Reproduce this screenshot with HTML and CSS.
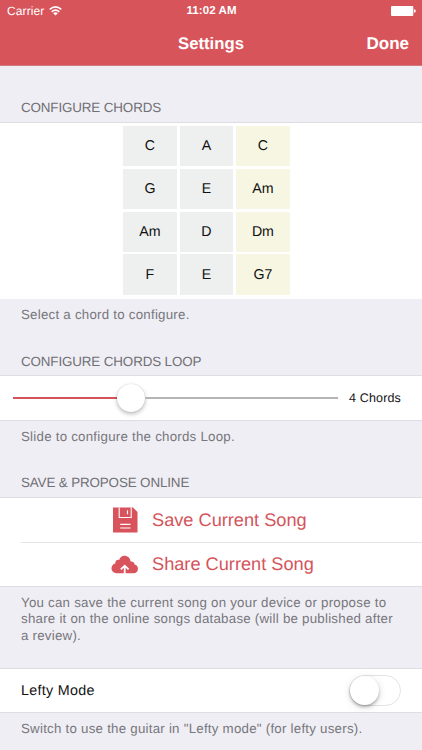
FILE: index.html
```html
<!DOCTYPE html>
<html lang="en">
<head>
<meta charset="utf-8">
<title>Settings</title>
<link rel="stylesheet" href="styles.css">
</head>
<body>
<header class="header">
  <div class="status">
    <div class="carrier"><span>Carrier</span>
      <svg class="wifi" width="13" height="10" viewBox="0 0 13 10"><g fill="none" stroke="#fff" stroke-width="1.6"><path d="M.7 3.4Q6.5-1.5 12.3 3.4"/><path d="M2.7 5.8Q6.5 2.4 10.3 5.8"/></g><path d="M4.2 7.2Q6.5 5.3 8.8 7.2L6.5 9.6Z" fill="#fff"/></svg>
    </div>
    <span class="time">11:02 AM</span>
    <svg class="battery" width="25" height="10" viewBox="0 0 25 10"><rect width="22.3" height="10" rx="1" fill="#fff"/><path d="M23 3.2Q24.8 3.5 24.8 5T23 6.8Z" fill="#fff"/></svg>
  </div>
  <div class="nav"><h1 class="title">Settings</h1><span class="done">Done</span></div>
</header>
<main>
  <section class="chords-section">
    <h2 class="heading">CONFIGURE CHORDS</h2>
    <div class="panel chords-panel">
      <div class="chords">
        <span class="chord">C</span><span class="chord">A</span><span class="chord alt">C</span>
        <span class="chord">G</span><span class="chord">E</span><span class="chord alt">Am</span>
        <span class="chord">Am</span><span class="chord">D</span><span class="chord alt">Dm</span>
        <span class="chord">F</span><span class="chord">E</span><span class="chord alt">G7</span>
      </div>
    </div>
    <p class="note select-note">Select a chord to configure.</p>
  </section>
  <section class="loop-section">
    <h2 class="heading loop-heading">CONFIGURE CHORDS LOOP</h2>
    <div class="panel loop-panel">
      <div class="slider"><span class="fill"></span><span class="knob"></span><span class="rest"></span></div>
      <span class="count">4 Chords</span>
    </div>
    <p class="note slide-note">Slide to configure the chords Loop.</p>
  </section>
  <section class="save-section">
    <h2 class="heading save-heading">SAVE &amp; PROPOSE ONLINE</h2>
    <div class="panel actions">
      <div class="action">
        <svg class="icon" width="28" height="26" viewBox="0 0 28 26"><path d="M2 .5H22L26.5 5V25.5H2Z" fill="#d8535b"/><path d="M8.2 .5V10.5H20.2V.5" fill="none" stroke="#fff" stroke-width="1.1"/><path d="M16.5 3.2V7.3M9.2 17.3H19.5M9.2 21H19.5" fill="none" stroke="#fff" stroke-width="1.2"/></svg>
        <span class="save-label">Save Current Song</span>
      </div>
      <div class="action">
        <svg class="icon" width="28" height="26" viewBox="0 0 28 26"><path d="M6.2 21.2C2.7 21.2.5 19 .5 16.2C.5 13.8 2.1 11.8 4.3 11.4C4 8.8 6.2 7.2 8.3 7.8C9.1 5.1 11 3.8 13.4 3.8C16.8 3.8 19.3 6.2 19.6 9.5C21.6 9.1 23.4 10.5 23.6 12.5C25.7 12.9 27 14.6 27 16.7C27 19.2 25.2 21.2 22.5 21.2Z" fill="#d8535b"/><path d="M13.7 22V14M9.8 17.3L13.7 13.7L17.6 17.3" fill="none" stroke="#fff" stroke-width="1.8"/></svg>
        <span class="share-label">Share Current Song</span>
      </div>
    </div>
    <p class="note save-note">You can save the current song on your device or propose to<br>share it on the online songs database (will be published after<br>a review).</p>
  </section>
  <section>
    <div class="panel lefty"><span class="lefty-label">Lefty Mode</span><span class="switch"><span class="thumb"></span></span></div>
    <p class="note lefty-note">Switch to use the guitar in "Lefty mode" (for lefty users).</p>
  </section>
</main>
</body>
</html>
```
FILE: styles.css
```css
* { box-sizing: border-box; }
body {
  margin: 0;
  height: 750px;
  overflow: hidden;
  background: #efeef4;
  color: #111;
  font-family: "Liberation Sans", Arial, sans-serif;
  text-rendering: geometricPrecision;
}
h1, h2, p { margin: 0; font-weight: normal; }
span { white-space: nowrap; }
.header { height: 66px; background: #d8545b; color: #fff; border-bottom: 1px solid #d37980; }
.status { display: grid; grid-template-columns: 1fr auto 1fr; height: 22px; padding: 0 6px 0 7px; align-items: center; font-size: 12px; }
.carrier { display: flex; align-items: center; gap: 5px; letter-spacing: .1px; }
.wifi { margin-bottom: 1px; }
.time { font-weight: bold; font-size: 11.5px; letter-spacing: .1px; }
.battery { justify-self: end; }
.nav { display: grid; grid-template-columns: 1fr auto 1fr; height: 43px; padding: 0 13px; align-items: center; font-size: 17px; font-weight: bold; }
.title { grid-column: 2; font-size: 16.7px; font-weight: bold; }
.done { justify-self: end; }
.chords-section { height: 274px; }
.loop-section { height: 120px; }
.save-section { height: 208px; }
.heading { height: 56px; padding: 33px 21px 0; font-size: 13.4px; line-height: 17px; letter-spacing: -.13px; color: #707075; white-space: nowrap; }
.panel { background: #fff; border-top: 1px solid #dedde2; border-bottom: 1px solid #dedde2; }
.chords-panel { height: 177px; padding: 3px 0 0 123.3px; border-bottom: 0; }
.chords { display: grid; grid-template-columns: repeat(3, 53.3px); grid-template-rows: repeat(4, 40.3px); gap: 2.5px 3.2px; }
.chord { display: flex; align-items: center; justify-content: center; background: #eef0f0; font-size: 14.2px; }
.alt { background: #f7f6e3; }
.note { padding: 8px 21px 0; font-size: 13.3px; line-height: 16.3px; letter-spacing: .24px; color: #77777c; white-space: nowrap; }
.loop-heading { height: 35px; padding-top: 13px; }
.loop-panel { display: flex; align-items: center; height: 46px; padding: 0 21px 0 13px; justify-content: space-between; }
.slider { display: flex; align-items: center; width: 325px; }
.fill { width: 104px; height: 2px; background: #d4545b; }
.knob { width: 28px; height: 28px; border-radius: 50%; background: #fff; box-shadow: 0 2px 4px #0004, 0 0 1px #0003; }
.rest { flex: 1; height: 2px; background: #b5b5b5; }
.count { font-size: 12.5px; letter-spacing: .15px; }
.save-heading { height: 37px; padding-top: 14px; }
.actions { height: 90px; }
.action { display: flex; align-items: center; height: 44px; padding-left: 111px; gap: 13px; color: #d4545b; font-size: 18.2px; }
.action + .action { margin-left: 21px; padding-left: 90px; border-top: 1px solid #e4e3e7; }
.lefty { height: 45px; padding: 0 21px; display: flex; align-items: center; justify-content: space-between; }
.lefty-label { font-size: 14.3px; letter-spacing: .3px; }
.switch { width: 52px; height: 31px; border: 1.5px solid #e3e3e4; border-radius: 16px; }
.thumb { display: block; width: 29px; height: 29px; border-radius: 50%; background: #fff; box-shadow: 0 2px 3px #0004, 0 2px 8px #0002; }
```
